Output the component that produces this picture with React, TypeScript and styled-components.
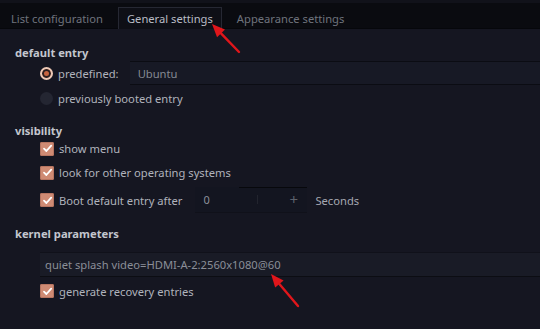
import React from "react";
import styled, { createGlobalStyle } from "styled-components";

const Global = createGlobalStyle`
  html, body {
    margin: 0;
    padding: 0;
    background: #151621;
  }
  body {
    font-family: "Noto Sans", "Open Sans", sans-serif;
    font-size: 11.2px;
    color: #b4b7c0;
  }
`;

const Window = styled.div`
  position: relative;
  width: 540px;
  height: 329px;
  overflow: hidden;
  background: #151621;
`;

const TabBar = styled.div`
  display: flex;
  align-items: flex-end;
  height: 29px;
  padding-left: 2px;
  background: #0a0b10;
  border-top: 3px solid #11121a;
  box-sizing: border-box;
  border-bottom: 1px solid #06070b;
`;

const Tab = styled.div<{ $active?: boolean }>`
  height: 21px;
  display: flex;
  align-items: center;
  padding: 0 8px;
  margin-right: 6px;
  color: ${(p) => (p.$active ? "#b9bcc5" : "#6f737d")};
  background: ${(p) => (p.$active ? "#0e0f16" : "transparent")};
  border: 1px solid ${(p) => (p.$active ? "#262833" : "transparent")};
  border-bottom: none;
  margin-bottom: -1px;
`;

const Content = styled.div`
  padding: 15px 0 0 15px;
  display: flex;
  flex-direction: column;
`;

const Section = styled.div<{ $top?: number }>`
  display: flex;
  flex-direction: column;
  margin-top: ${(p) => p.$top ?? 0}px;
`;

const Title = styled.div`
  font-weight: bold;
  color: #c3c6ce;
  height: 17px;
  line-height: 17px;
`;

const Row = styled.div<{ $h?: number }>`
  display: flex;
  align-items: center;
  height: ${(p) => p.$h ?? 24}px;
  padding-left: 25px;
  gap: 5px;
`;

const Label = styled.span`
  color: #b0b3bc;
`;

const RadioOn = styled.span`
  width: 13px;
  height: 13px;
  border-radius: 50%;
  box-sizing: border-box;
  background: #c7643f;
  border: 2px solid #edc9b6;
  box-shadow: inset 0 0 0 2px #2a1e1f;
  flex: none;
`;

const RadioOff = styled.span`
  width: 13px;
  height: 13px;
  border-radius: 50%;
  background: #242632;
  flex: none;
`;

const CheckBox = styled.span`
  width: 14px;
  height: 14px;
  border-radius: 2px;
  background: #cf8b74;
  box-shadow: inset 0 0 0 1px #b77561;
  display: flex;
  align-items: center;
  justify-content: center;
  flex: none;
`;

const Combo = styled.div`
  flex: 1;
  height: 22px;
  margin-left: 6px;
  display: flex;
  align-items: center;
  padding-left: 8px;
  background: #171925;
  border-top: 1px solid #0b0c13;
  border-bottom: 1px solid #0b0c13;
  color: #858993;
`;

const Spin = styled.div`
  position: relative;
  width: 112px;
  height: 26px;
  margin-left: 8px;
  display: flex;
  align-items: center;
  background: #131520;
  box-sizing: border-box;
  border-bottom: 1px solid #10111a;
  color: #8c909a;
  font-size: 11px;
`;

const SpinTop = styled.div`
  position: absolute;
  top: 0;
  left: 44px;
  right: 0;
  height: 1px;
  background: #07080c;
`;

const SpinValue = styled.span`
  width: 62px;
  padding-left: 8px;
  box-sizing: border-box;
`;

const SpinDivider = styled.span`
  width: 1px;
  height: 9px;
  background: #22242e;
`;

const SpinPlus = styled.span`
  margin-left: 31px;
  color: #5d616b;
  font-size: 15px;
  line-height: 1;
`;

const Seconds = styled.span`
  margin-left: 3px;
  color: #a5a8b1;
`;

const Field = styled.div`
  height: 23px;
  margin: 10px 0 0 25px;
  display: flex;
  align-items: center;
  padding-left: 5px;
  background: #191b26;
  border-top: 1px solid #10111a;
  border-bottom: 1px solid #0c0d13;
  color: #8a8e98;
`;

const Arrows = styled.svg`
  position: absolute;
  left: 0;
  top: 0;
  pointer-events: none;
`;

function Check() {
  return (
    <svg width="11" height="11" viewBox="0 0 11 11">
      <path d="M2 5.6 L4.4 8 L9.2 2.6" fill="none" stroke="#fff" strokeWidth="1.8" strokeLinecap="round" strokeLinejoin="round" />
    </svg>
  );
}

function Arrow({ x1, y1, x2, y2 }: { x1: number; y1: number; x2: number; y2: number }) {
  const a = Math.atan2(y2 - y1, x2 - x1);
  const len = 13;
  const w = 5.5;
  const bx = x2 - Math.cos(a) * len;
  const by = y2 - Math.sin(a) * len;
  const px = -Math.sin(a) * w;
  const py = Math.cos(a) * w;
  return (
    <g>
      <line x1={x1} y1={y1} x2={bx} y2={by} stroke="#e0161b" strokeWidth="2.4" strokeLinecap="round" />
      <polygon points={`${x2},${y2} ${bx + px},${by + py} ${bx - px},${by - py}`} fill="#e0161b" />
    </g>
  );
}

export default function App() {
  return (
    <Window>
      <Global />
      <TabBar>
        <Tab>List configuration</Tab>
        <Tab $active>General settings</Tab>
        <Tab>Appearance settings</Tab>
      </TabBar>
      <Content>
        <Section>
          <Title>default entry</Title>
          <Row $h={24}>
            <RadioOn />
            <Label>predefined:</Label>
            <Combo>Ubuntu</Combo>
          </Row>
          <Row $h={27}>
            <RadioOff />
            <Label>previously booted entry</Label>
          </Row>
        </Section>
        <Section $top={10}>
          <Title>visibility</Title>
          <Row $h={19}>
            <CheckBox><Check /></CheckBox>
            <Label>show menu</Label>
          </Row>
          <Row $h={29}>
            <CheckBox><Check /></CheckBox>
            <Label>look for other operating systems</Label>
          </Row>
          <Row $h={26}>
            <CheckBox><Check /></CheckBox>
            <Label>Boot default entry after</Label>
            <Spin>
              <SpinTop />
              <SpinValue>0</SpinValue>
              <SpinDivider />
              <SpinPlus>+</SpinPlus>
            </Spin>
            <Seconds>Seconds</Seconds>
          </Row>
        </Section>
        <Section $top={12}>
          <Title>kernel parameters</Title>
          <Field>quiet splash video=HDMI-A-2:2560x1080@60</Field>
          <Row $h={28}>
            <CheckBox><Check /></CheckBox>
            <Label>generate recovery entries</Label>
          </Row>
        </Section>
      </Content>
      <Arrows width="540" height="329">
        <Arrow x1={239} y1={52} x2={212} y2={24} />
        <Arrow x1={298} y1={306} x2={271} y2={274} />
      </Arrows>
    </Window>
  );
}
